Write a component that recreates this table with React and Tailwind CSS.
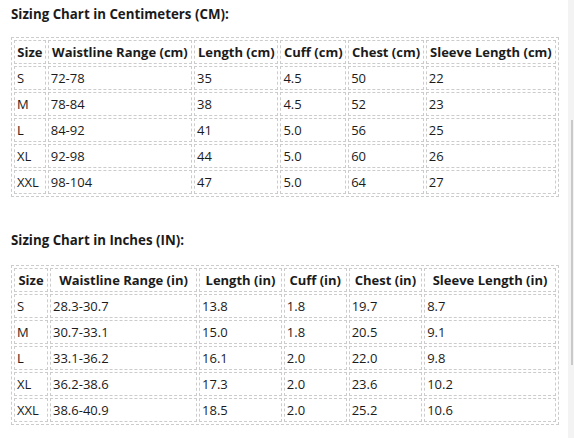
const cm = {
  head: ['Size', 'Waistline Range (cm)', 'Length (cm)', 'Cuff (cm)', 'Chest (cm)', 'Sleeve Length (cm)'],
  rows: [
    ['S', '72-78', '35', '4.5', '50', '22'],
    ['M', '78-84', '38', '4.5', '52', '23'],
    ['L', '84-92', '41', '5.0', '56', '25'],
    ['XL', '92-98', '44', '5.0', '60', '26'],
    ['XXL', '98-104', '47', '5.0', '64', '27'],
  ],
}

const inches = {
  head: ['Size', 'Waistline Range (in)', 'Length (in)', 'Cuff (in)', 'Chest (in)', 'Sleeve Length (in)'],
  rows: [
    ['S', '28.3-30.7', '13.8', '1.8', '19.7', '8.7'],
    ['M', '30.7-33.1', '15.0', '1.8', '20.5', '9.1'],
    ['L', '33.1-36.2', '16.1', '2.0', '22.0', '9.8'],
    ['XL', '36.2-38.6', '17.3', '2.0', '23.6', '10.2'],
    ['XXL', '38.6-40.9', '18.5', '2.0', '25.2', '10.6'],
  ],
}

const SizeTable = ({ data }) => {
  return (
    <table className="w-[548px] border-separate border-spacing-[2px] border border-dashed border-[#cccccc]">
      <thead>
        <tr>
          {data.head.map((h) => (
            <th key={h} className="border border-dashed border-[#cccccc] px-[2px] py-[2px] h-[24px] text-center font-bold whitespace-nowrap">
              {h}
            </th>
          ))}
        </tr>
      </thead>
      <tbody>
        {data.rows.map((row) => (
          <tr key={row[0]}>
            {row.map((c, i) => (
              <td key={i} className="border border-dashed border-[#cccccc] px-[2px] py-[2px] h-[24px] text-left whitespace-nowrap">
                {c}
              </td>
            ))}
          </tr>
        ))}
      </tbody>
    </table>
  )
}

export default function App() {
  return (
    <div className="relative w-[574px] h-[438px] bg-white overflow-hidden text-[#1b1b1b] text-[13px] leading-[18px]" style={{ fontFamily: '"Open Sans", "Noto Sans", sans-serif' }}>
      <div className="pl-[11px] pt-[5px]">
        <h3 className="text-[13.3px] leading-[18px] font-bold m-0">Sizing Chart in Centimeters (CM):</h3>
        <div className="mt-[14px]">
          <SizeTable data={cm} />
        </div>
        <h3 className="text-[13.3px] leading-[18px] font-bold mt-[34px]">Sizing Chart in Inches (IN):</h3>
        <div className="mt-[16px]">
          <SizeTable data={inches} />
        </div>
      </div>
      <div className="absolute right-0 top-0 h-full w-[6px] bg-[#f3f3f3]">
        <div className="absolute right-[1px] top-[120px] h-[245px] w-[2px] bg-[#c9c9c9]" />
      </div>
    </div>
  )
}
